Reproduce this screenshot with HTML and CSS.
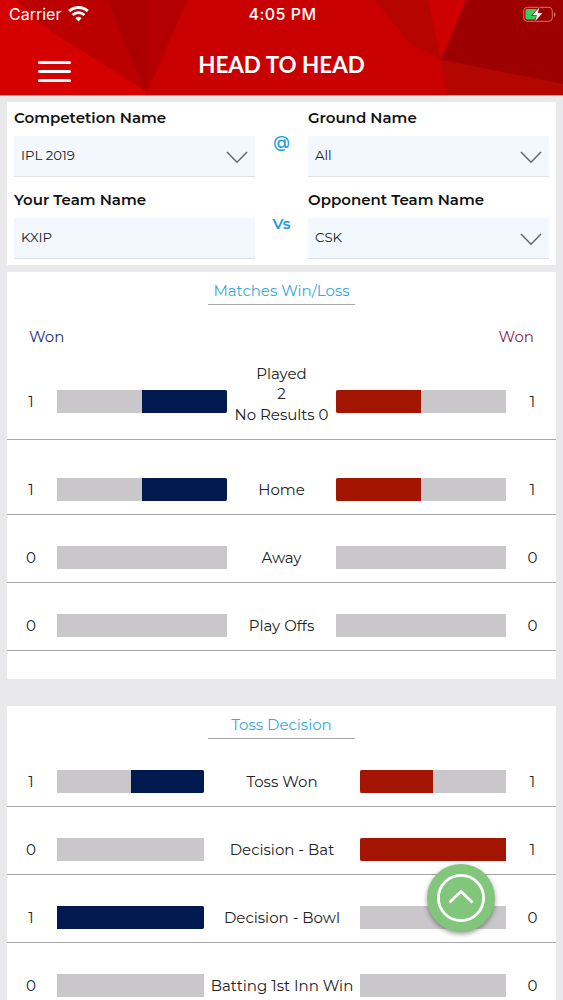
FILE: index.html
```html
<!DOCTYPE html>
<html lang="en">
<head>
  <meta charset="UTF-8">
  <meta name="viewport" content="width=device-width, initial-scale=1">
  <title>Head to Head</title>
  <link rel="stylesheet" href="styles.css">
</head>
<body>
  <header class="header">
    <svg class="header-bg" viewBox="0 0 563 95" preserveAspectRatio="none">
      <rect width="563" height="95" fill="#c80000"/>
      <polygon points="0,0 147,0 147,95 0,95" fill="#d50000"/>
      <polygon points="16,0 187,0 147,92 38,23" fill="#bb0000"/>
      <polygon points="108,0 147,0 147,92 122,40" fill="#ac0000"/>
      <polygon points="147,0 187,0 147,92" fill="#b40000"/>
      <polygon points="375,0 430,0 441,60 409,42" fill="#b60400"/>
      <polygon points="428,0 467,0 441,60" fill="#cf0000"/>
      <polygon points="466,0 563,0 563,84 441,60" fill="#9c0000"/>
      <polygon points="441,60 563,84 563,95 447,95" fill="#b40600"/>
    </svg>
    <div class="status">
      <div class="carrier">
        <span>Carrier</span>
        <svg width="21" height="16" viewBox="0 0 21 16">
          <path d="M1.200 5.200a13.400 13.400 0 0 1 18.600 0" fill="none" stroke="#fff" stroke-width="3"/>
          <path d="M4.600 9a8.500 8.500 0 0 1 11.800 0" fill="none" stroke="#fff" stroke-width="2.700"/>
          <path d="M10.500 15.600L7.400 12.300a4.500 4.500 0 0 1 6.200 0z" fill="#fff"/>
        </svg>
      </div>
      <span class="time">4:05 PM</span>
      <svg class="battery" width="33" height="17" viewBox="0 0 33 17">
        <rect x=".8" y="1.300" width="28.500" height="14" rx="3.500" fill="none" stroke="#dc7466" stroke-width="1"/>
        <path d="M31 6v5q1.500-.6 1.500-2.500T31 6z" fill="#dc7466"/>
        <rect x="2.500" y="3" width="12.500" height="10.600" rx="1.800" fill="#35cf5c"/>
        <path d="M16.300 1.500L9.400 9.300h4.500l-1.700 5.900 7.200-8.200h-4.500z" fill="#fff" stroke="#a00000" stroke-width="1.200" paint-order="stroke"/>
      </svg>
    </div>
    <div class="titlebar">
      <div class="menu"><i></i><i></i><i></i></div>
      <h1>HEAD TO HEAD</h1>
    </div>
  </header>

  <section class="card filters">
    <div class="field">
      <label>Competetion Name</label>
      <div class="select">
        <span>IPL 2019</span>
        <svg width="22" height="13" viewBox="0 0 22 13"><path d="M1 1l10 10.200L21 1"/></svg>
      </div>
    </div>
    <div class="sep">@</div>
    <div class="field">
      <label>Ground Name</label>
      <div class="select">
        <span>All</span>
        <svg width="22" height="13" viewBox="0 0 22 13"><path d="M1 1l10 10.200L21 1"/></svg>
      </div>
    </div>
    <div class="field">
      <label>Your Team Name</label>
      <div class="select"><span>KXIP</span></div>
    </div>
    <div class="sep vs">Vs</div>
    <div class="field">
      <label>Opponent Team Name</label>
      <div class="select">
        <span>CSK</span>
        <svg width="22" height="13" viewBox="0 0 22 13"><path d="M1 1l10 10.200L21 1"/></svg>
      </div>
    </div>
  </section>

  <section class="card matches">
    <h2>Matches Win/Loss</h2>
    <div class="legend"><span class="home">Won</span><span class="away">Won</span></div>
    <div class="row played">
      <span class="num">1</span>
      <div class="bar left"><div class="fill" style="width:50%"></div></div>
      <span class="name">Played<br>2<br>No Results 0</span>
      <div class="bar right"><div class="fill" style="width:50%"></div></div>
      <span class="num">1</span>
    </div>
    <div class="row first">
      <span class="num">1</span>
      <div class="bar left"><div class="fill" style="width:50%"></div></div>
      <span class="name">Home</span>
      <div class="bar right"><div class="fill" style="width:50%"></div></div>
      <span class="num">1</span>
    </div>
    <div class="row">
      <span class="num">0</span>
      <div class="bar left"></div>
      <span class="name">Away</span>
      <div class="bar right"></div>
      <span class="num">0</span>
    </div>
    <div class="row">
      <span class="num">0</span>
      <div class="bar left"></div>
      <span class="name">Play Offs</span>
      <div class="bar right"></div>
      <span class="num">0</span>
    </div>
  </section>

  <section class="card toss">
    <h2>Toss Decision</h2>
    <div class="row">
      <span class="num">1</span>
      <div class="bar left"><div class="fill" style="width:50%"></div></div>
      <span class="name">Toss Won</span>
      <div class="bar right"><div class="fill" style="width:50%"></div></div>
      <span class="num">1</span>
    </div>
    <div class="row">
      <span class="num">0</span>
      <div class="bar left"></div>
      <span class="name">Decision - Bat</span>
      <div class="bar right"><div class="fill" style="width:100%"></div></div>
      <span class="num">1</span>
    </div>
    <div class="row">
      <span class="num">1</span>
      <div class="bar left"><div class="fill" style="width:100%"></div></div>
      <span class="name">Decision - Bowl</span>
      <div class="bar right"></div>
      <span class="num">0</span>
    </div>
    <div class="row last">
      <span class="num">0</span>
      <div class="bar left"></div>
      <span class="name">Batting 1st Inn Win</span>
      <div class="bar right"></div>
      <span class="num">0</span>
    </div>
  </section>

  <div class="to-top">
    <svg width="48" height="48" viewBox="0 0 48 48">
      <circle cx="24" cy="24" r="22.600"/>
      <path d="M12.500 28.500L24 17.500l11.500 11"/>
    </svg>
  </div>
</body>
</html>
```

FILE: styles.css
```css
* {
  box-sizing: border-box;
}
body {
  margin: 0;
  position: relative;
  background: #e9e8eb;
  font-family: Montserrat, Inter, sans-serif;
  font-size: 15px;
  color: #222;
}
.header {
  position: relative;
  height: 96px;
  color: #fff;
  border-bottom: 1px solid #ff8a8a;
}
.header-bg {
  position: absolute;
  left: 0;
  top: 0;
  width: 100%;
  height: 95px;
}
.status {
  position: relative;
  display: grid;
  grid-template-columns: 1fr auto 1fr;
  align-items: center;
  height: 28px;
  padding: 0 7px 0 9px;
  font-family: Inter, sans-serif;
  font-size: 16px;
}
.carrier {
  display: flex;
  align-items: center;
  gap: 7px;
  font-size: 16px;
}
.carrier svg {
  margin-top: -1px;
}
.time {
  font-weight: 500;
  letter-spacing: 0.5px;
}
.battery {
  justify-self: end;
}
.titlebar {
  position: relative;
  display: grid;
  grid-template-columns: 100px 1fr 100px;
  height: 67px;
}
.menu {
  display: flex;
  flex-direction: column;
  gap: 6px;
  padding: 33px 0 0 38px;
}
.menu i {
  width: 33px;
  height: 3px;
  border-radius: 2px;
  background: #fff;
}
h1 {
  margin: 0;
  text-align: center;
  font: bold 22.4px/74px Lato, sans-serif;
}

.card {
  margin: 0 7px;
  background: #fff;
}
.filters {
  display: grid;
  grid-template-columns: 241px 53px 241px;
  align-content: start;
  row-gap: 7px;
  height: 163px;
  margin-top: 6px;
  padding: 0 7px;
}
.field label {
  display: block;
  height: 34px;
  line-height: 32px;
  font-weight: 600;
  color: #111;
  white-space: nowrap;
}
.select {
  display: flex;
  align-items: center;
  justify-content: space-between;
  height: 41px;
  padding: 0 7px;
  background: #f3f8fe;
  border-bottom: 1px solid #dfe3e8;
  font-size: 13.3px;
}
.select span {
  margin-top: -2px;
}
.select svg {
  margin-top: 3px;
  fill: none;
  stroke: #666;
  stroke-width: 1.5;
}
.sep {
  padding-top: 31px;
  text-align: center;
  font-size: 16px;
  font-weight: 600;
  color: #1c9ee5;
}
.vs {
  padding-top: 30px;
  font-size: 15px;
}

h2 {
  width: 147px;
  height: 33px;
  margin: 0 auto;
  text-align: center;
  font-size: 15px;
  font-weight: 400;
  line-height: 37px;
  color: #36a9e0;
  border-bottom: 1px solid #a5a5aa;
  white-space: nowrap;
}
.matches {
  height: 407px;
  margin-top: 7px;
}
.legend {
  display: flex;
  justify-content: space-between;
  padding: 22px 22px 0;
  line-height: 20px;
}
.home {
  color: #1d3270;
}
.away {
  color: #8f1f4c;
}
.row {
  display: grid;
  grid-template-columns: 50px 170px 109px 170px 50px;
  align-items: end;
  height: 68px;
  padding-bottom: 13px;
  border-bottom: 1px solid #a5a5aa;
}
.row.first {
  height: 74.5px;
}
.row.played {
  height: 93px;
  padding-bottom: 26px;
}
.row .name,
.num {
  text-align: center;
  line-height: 23px;
  white-space: nowrap;
}
.played .name {
  line-height: 20.5px;
  margin-bottom: -12px;
}
.num:first-child {
  padding-right: 2px;
}
.num:last-child {
  padding-left: 3px;
}
.bar {
  display: flex;
  height: 23px;
  background: #c9c7ca;
}
.bar.left {
  justify-content: flex-end;
}
.left .fill {
  background: #00194e;
  border-radius: 0 2px 2px 0;
}
.right .fill {
  background: #a31500;
  border-radius: 2px 0 0 2px;
}

.toss {
  margin-top: 27px;
}
.toss .row {
  grid-template-columns: 50px 147px 156px 146px 50px;
}
.toss .last {
  height: 57px;
  padding-bottom: 3px;
  border-bottom: 0;
}

.to-top {
  position: absolute;
  left: 427px;
  top: 864px;
  width: 68px;
  height: 68px;
  padding: 10px;
  border-radius: 50%;
  background: #82c67c;
  box-shadow: 0 2px 5px rgba(0, 0, 0, 0.4);
}
.to-top svg {
  display: block;
  fill: none;
  stroke: #fff;
  stroke-width: 2.8;
}
```
